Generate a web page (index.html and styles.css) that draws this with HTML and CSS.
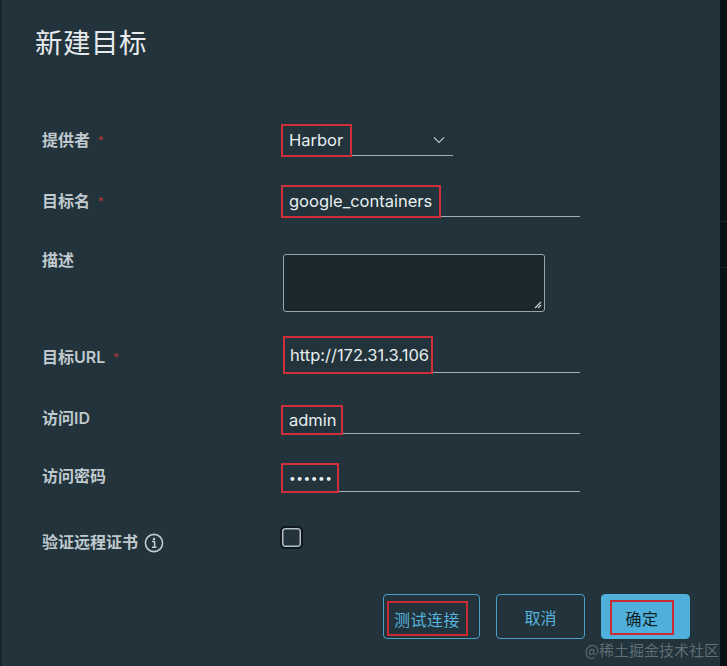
FILE: index.html
```html
<!DOCTYPE html>
<html lang="zh">
<head>
<meta charset="utf-8">
<title>新建目标</title>
<link rel="stylesheet" href="styles.css">
</head>
<body>
<div class="screen">
  <div class="modal">
    <h1 class="title">新建目标</h1>
    <div class="form">
      <div class="row">
        <div class="label">提供者<span class="req">*</span></div>
        <div class="field field-select">
          <span class="mark">Harbor</span>
          <svg class="chev" width="12" height="8" viewBox="0 0 12 8"><path d="M1 1.5 L6 6.5 L11 1.5" fill="none" stroke="#b9c3c8" stroke-width="1.2"/></svg>
        </div>
      </div>
      <div class="row">
        <div class="label">目标名<span class="req">*</span></div>
        <div class="field"><span class="mark">google_containers</span></div>
      </div>
      <div class="row row-area">
        <div class="label label-area">描述</div>
        <div class="textarea">
          <svg class="grip" width="8" height="8" viewBox="0 0 8 8"><path d="M7 1 L1 7 M7 4 L4 7" stroke="#c7d0d4" stroke-width="1.2"/></svg>
        </div>
      </div>
      <div class="row">
        <div class="label">目标URL<span class="req">*</span></div>
        <div class="field"><span class="mark mark-tall">http://172.31.3.106</span></div>
      </div>
      <div class="row">
        <div class="label">访问ID</div>
        <div class="field"><span class="mark mark-short">admin</span></div>
      </div>
      <div class="row row-pw">
        <div class="label">访问密码</div>
        <div class="field"><span class="mark mark-short dots">••••••</span></div>
      </div>
      <div class="row row-check">
        <div class="label">验证远程证书
          <svg class="info" width="20" height="20" viewBox="0 0 20 20"><circle cx="10" cy="10" r="8.6" fill="none" stroke="#c3ccd0" stroke-width="1.6"/><circle cx="10" cy="5.9" r="1.2" fill="#c3ccd0"/><path d="M8 8.6 H10.6 V14 M8 14.3 H12.5" fill="none" stroke="#c3ccd0" stroke-width="1.5"/></svg>
        </div>
        <div class="check-wrap"><span class="checkbox"></span></div>
      </div>
    </div>
    <div class="footer">
      <button class="btn btn-outline"><span class="mark-btn">测试连接</span></button>
      <button class="btn btn-outline">取消</button>
      <button class="btn btn-primary"><span class="mark-btn mark-btn-ok">确定</span></button>
    </div>
    <div class="watermark">@稀土掘金技术社区</div>
  </div>
  <div class="backdrop">
    <div class="bd-line bd-line-1"></div>
    <div class="bd-line bd-line-2"></div>
  </div>
</div>
</body>
</html>
```
FILE: styles.css
```css
* { box-sizing: border-box; }
html, body {
  margin: 0;
  padding: 0;
  width: 727px;
  height: 666px;
  overflow: hidden;
  background: #0b1215;
  font-family: Inter, "Noto Sans CJK SC", sans-serif;
}
.screen {
  display: flex;
  height: 666px;
}
.modal {
  position: relative;
  width: 720px;
  height: 666px;
  background: #22333b;
  border-left: 2px solid #17242a;
  padding: 25px 30px 0 40px;
  display: flex;
  flex-direction: column;
}
.title {
  margin: 0 0 0 -7px;
  font-size: 27.5px;
  line-height: 36px;
  font-weight: 400;
  color: #e6eaec;
  letter-spacing: 0.5px;
}
.form {
  margin-top: 63px;
  display: flex;
  flex-direction: column;
  gap: 29px;
}
.row {
  display: flex;
  align-items: flex-start;
}
.label {
  width: 241px;
  flex: none;
  font-size: 16px;
  line-height: 32px;
  font-weight: 600;
  color: #bfc9ce;
  display: flex;
  align-items: center;
}
.req {
  color: #b83a32;
  font-size: 11px;
  font-weight: 400;
  margin-left: 8px;
  position: relative;
  top: 0;
}
.field {
  width: 297px;
  height: 32px;
  border-bottom: 1px solid #a3aeb3;
  display: flex;
  align-items: stretch;
  color: #e8eef0;
  font-size: 16.5px;
}
.field-select {
  width: 170px;
  align-items: stretch;
  justify-content: space-between;
}
.chev {
  align-self: center;
  margin-right: 8px;
  margin-top: 1px;
}
.mark {
  display: inline-flex;
  align-items: center;
  border: 2px solid #cf2f39;
  padding: 0 7px 0 6px;
  margin-left: -2px;
  height: 33px;
  line-height: 1;
}
.mark-tall {
  height: 38px;
  margin-top: -5px;
  margin-left: 0;
  padding: 0 2px 0 5px;
}
.mark-short {
  height: 30px;
  margin-top: 3px;
  padding-right: 4px;
}
.dots {
  font-size: 12px;
  letter-spacing: 0.5px;
  padding-right: 4px;
}
.row-pw {
  margin-top: -3px;
}
.label-area {
  line-height: 14px;
  margin-top: 7px;
}
.textarea {
  position: relative;
  margin-top: 8px;
  width: 262px;
  height: 58px;
  background: #1a272d;
  border: 1px solid #97a4a9;
  border-radius: 3px;
}
.grip {
  position: absolute;
  right: 2px;
  bottom: 2px;
}
.row-check .label {
  line-height: 32px;
  margin-top: 5px;
}
.info {
  margin-left: 6px;
  margin-top: 1px;
}
.check-wrap {
  height: 30px;
  display: flex;
  align-items: center;
  margin-left: -3px;
  margin-top: 1px;
}
.checkbox {
  width: 23px;
  height: 23px;
  border: 2px solid #0f191d;
  border-radius: 5px;
  box-shadow: inset 0 0 0 1.5px #b4c0c5;
  background: #22333b;
}
.footer {
  margin-top: 36px;
  display: flex;
  justify-content: flex-end;
  gap: 16px;
}
.btn {
  height: 45px;
  border-radius: 4px;
  font-family: Inter, "Noto Sans CJK SC", sans-serif;
  font-size: 16px;
  display: flex;
  align-items: center;
  justify-content: center;
  padding: 0;
  cursor: pointer;
}
.btn-outline {
  width: 89px;
  background: transparent;
  border: 1px solid #4a9fc4;
  color: #56b3de;
}
.btn-outline:first-child {
  width: 97px;
}
.btn-primary {
  width: 89px;
  background: #4fb0dc;
  border: 1px solid #4fb0dc;
  color: #0f1d24;
  justify-content: flex-start;
  padding-left: 8px;
}
.mark-btn {
  border: 2px solid #c82a33;
  height: 35px;
  width: 81px;
  display: flex;
  align-items: center;
  justify-content: center;
  margin-right: 9px;
  margin-top: 4px;
  letter-spacing: 0.5px;
}
.mark-btn-ok {
  width: 64px;
  margin: 2px 0 0 0;
}
.watermark {
  position: absolute;
  right: 1px;
  bottom: 6px;
  font-size: 15px;
  color: rgba(200, 210, 214, 0.38);
  font-family: "Noto Sans CJK SC", sans-serif;
}
.backdrop {
  flex: 1;
  position: relative;
  background: #0a1114;
}
.bd-line {
  height: 1px;
  background: #1a2327;
  margin-top: 221px;
}
.bd-line-2 {
  margin-top: 45px;
}
```
